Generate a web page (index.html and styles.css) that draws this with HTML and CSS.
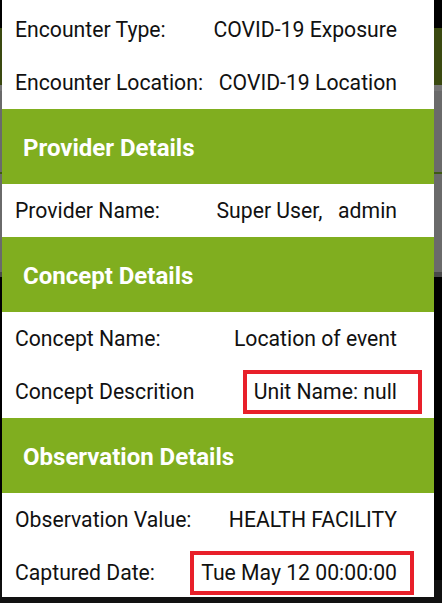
FILE: index.html
```html
<!DOCTYPE html>
<html lang="en">

<head>
    <meta charset="UTF-8">
    <meta name="viewport" content="width=device-width, initial-scale=1.0">
    <title>Observation Details</title>
    <link rel="stylesheet" href="styles.css">
</head>

<body>
    <div class="dialog">
        <div class="row">
            <span class="label">Encounter Type:</span>
            <span class="value">COVID-19 Exposure</span>
        </div>
        <div class="row">
            <span class="label">Encounter Location:</span>
            <span class="value">COVID-19 Location</span>
        </div>

        <div class="section-title">Provider Details</div>
        <div class="row">
            <span class="label">Provider Name:</span>
            <span class="value keep-spaces">Super User,   admin</span>
        </div>

        <div class="section-title">Concept Details</div>
        <div class="row">
            <span class="label">Concept Name:</span>
            <span class="value">Location of event</span>
        </div>
        <div class="row">
            <span class="label">Concept Descrition</span>
            <span class="value marked mark-unit">Unit Name: null</span>
        </div>

        <div class="section-title">Observation Details</div>
        <div class="row">
            <span class="label">Observation Value:</span>
            <span class="value">HEALTH FACILITY</span>
        </div>
        <div class="row">
            <span class="label">Captured Date:</span>
            <span class="value marked mark-date">Tue May 12 00:00:00</span>
        </div>
    </div>
</body>

</html>
```

FILE: styles.css
```css
body {
    margin: 0;
    padding: 0;
    height: 603px;
    overflow: hidden;
    font-family: Roboto, "Liberation Sans", sans-serif;
    background:
        linear-gradient(to bottom,
            #000 0 28px,
            #3a4910 28px 85px,
            #757575 85px 91px,
            #6a6a6a 91px 172px,
            #3f5a14 172px 174px,
            #6a6a6a 174px 272px,
            #4a4a4a 272px 277px,
            #000 277px 580px,
            #111 580px);
}

.dialog {
    margin-left: 2px;
    width: 432px;
    height: 597px;
    padding-top: 3px;
    box-sizing: border-box;
    background: white;
    overflow: hidden;
}

.row {
    display: flex;
    align-items: center;
    justify-content: space-between;
    height: 53px;
    padding: 0 37px 0 13px;
    font-size: 21.2px;
    line-height: 25px;
    color: #111;
}

.value {
    position: relative;
}

.keep-spaces {
    white-space: pre;
}

.section-title {
    display: flex;
    align-items: center;
    height: 75px;
    padding: 3px 0 0 21px;
    box-sizing: border-box;
    background: #80ae1f;
    color: white;
    font-size: 24px;
    font-weight: bold;
}

/* red annotation boxes drawn over the values */
.marked::after {
    content: "";
    position: absolute;
    border: 4px solid #e8202a;
}

.mark-unit::after {
    top: -9px;
    bottom: -10px;
    left: -11px;
    right: -25px;
}

.mark-date::after {
    top: -9px;
    bottom: -10px;
    left: -11px;
    right: -17px;
}
```
